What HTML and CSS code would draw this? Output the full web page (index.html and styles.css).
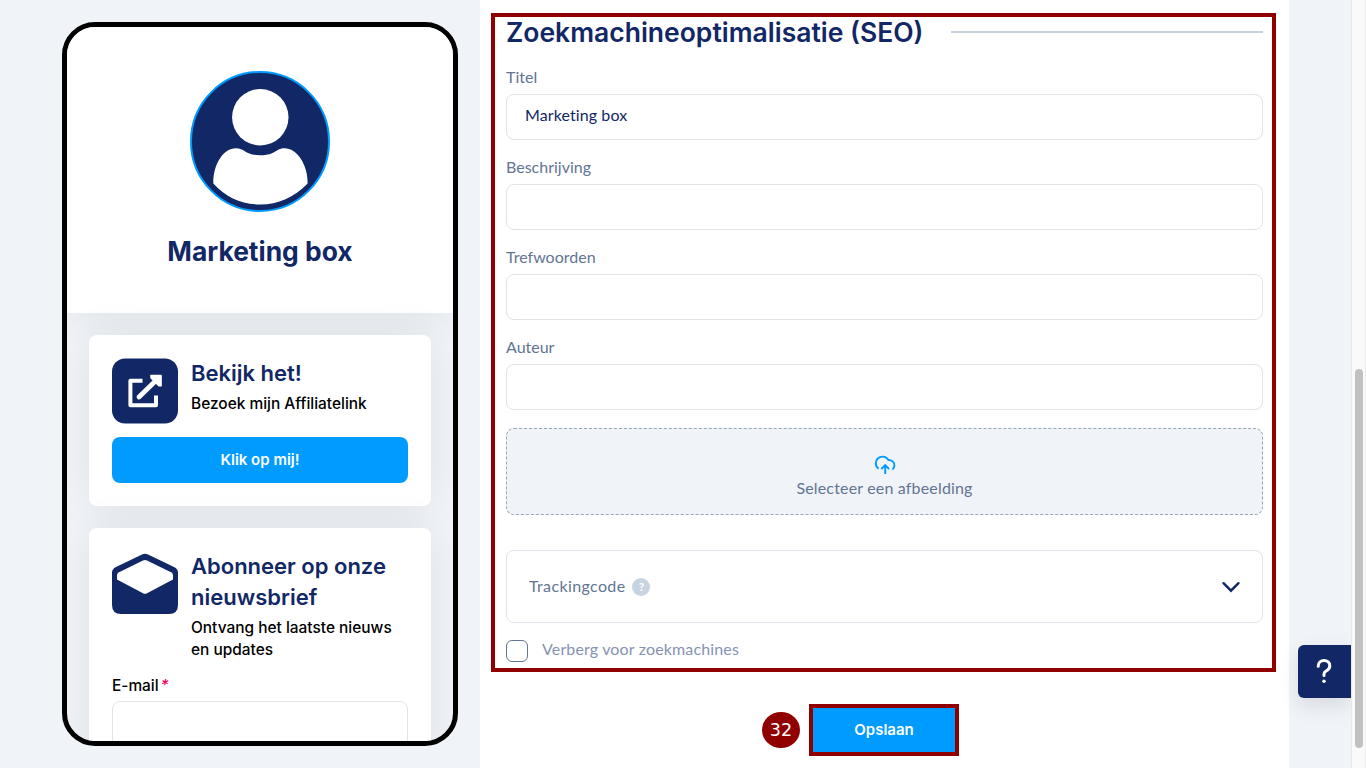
FILE: index.html
```html
<!DOCTYPE html>
<html lang="nl">
<head>
    <meta charset="UTF-8">
    <meta name="viewport" content="width=device-width, initial-scale=1.0">
    <title>Marketing box</title>
    <link rel="stylesheet" href="styles.css">
</head>
<body>

<aside class="preview">
    <div class="phone">
        <div class="profile">
            <svg class="avatar" viewBox="0 0 140 141">
                <ellipse cx="70" cy="70.5" rx="69" ry="69.5" fill="#122766" stroke="#009bff" stroke-width="2"/>
                <circle cx="70.3" cy="46.2" r="28.2" fill="#fff"/>
                <path d="M23.3 112.5C23 94 33 77.3 46 77.3C55 77.3 55 84.3 70.3 84.3C85.5 84.3 86 77.3 94.5 77.3C107 77.3 118 94 117.6 112.5C104 126.5 88 133.5 70.3 133.5C52 133.5 36 126.5 23.3 112.5Z" fill="#fff"/>
            </svg>
            <h1>Marketing box</h1>
        </div>
        <div class="card">
            <div class="card-head">
                <svg class="card-icon" viewBox="0 0 66 66">
                    <rect y="0.5" width="66" height="65" rx="13" fill="#122766"/>
                    <path d="M30.5 22.8H18.4V47.2H44V37.5" fill="none" stroke="#fff" stroke-width="4" stroke-linejoin="round"/>
                    <path d="M27 39L44.5 22" stroke="#fff" stroke-width="4.8" stroke-linecap="round"/>
                    <path d="M38.8 17.4H49.2V28L47 28L39 20Z" fill="#fff" stroke="#fff" stroke-width="1.2" stroke-linejoin="round"/>
                </svg>
                <div>
                    <h2>Bekijk het!</h2>
                    <p>Bezoek mijn Affiliatelink</p>
                </div>
            </div>
            <button class="card-btn">Klik op mij!</button>
        </div>
        <div class="card">
            <div class="card-head">
                <svg class="card-icon" viewBox="0 0 66 66">
                    <path d="M0 21.5Q0 18 4 16L30 3.6Q33 2 36 3.6L62 16Q66 18 66 21.5V54Q66 63 57 63H9Q0 63 0 54Z" fill="#122766"/>
                    <path d="M7 21.2L31 9.4Q33 8.5 35 9.4L59 21.2Q61 22.5 61 24V28.5L35 42.2Q33 43.2 31 42.2L5 28.5V24Q5 22.5 7 21.2Z" fill="#fff"/>
                </svg>
                <div>
                    <h2>Abonneer op onze nieuwsbrief</h2>
                    <p>Ontvang het laatste nieuws en updates</p>
                </div>
            </div>
            <label class="mail-label">E-mail<span>*</span></label>
            <input class="mail-input" type="email">
        </div>
    </div>
</aside>

<main class="panel">
    <section class="seo">
        <h2 class="seo-title">Zoekmachineoptimalisatie (SEO)</h2>
        <div class="field">
            <label for="titel">Titel</label>
            <input type="text" id="titel" value="Marketing box">
        </div>
        <div class="field">
            <label for="beschrijving">Beschrijving</label>
            <input type="text" id="beschrijving">
        </div>
        <div class="field">
            <label for="trefwoorden">Trefwoorden</label>
            <input type="text" id="trefwoorden">
        </div>
        <div class="field">
            <label for="auteur">Auteur</label>
            <input type="text" id="auteur">
        </div>
        <div class="upload">
            <svg width="22" height="20" viewBox="0 0 22 20" fill="none" stroke="#009bff" stroke-width="1.9">
                <path d="M4.6 14.6C2.8 13.4 1.8 11.5 1.8 9.2C1.8 5.4 4.8 2.6 8.6 2.6C11.3 2.6 13.2 3.8 14.4 6C17.8 6 20.4 8.200 20.4 11.500C20.4 13.200 19.600 14.500 18.400 15.500"/>
                <path d="M11.2 20V11M7.3 15L11.2 11.200L15.1 15"/>
            </svg>
            <span>Selecteer een afbeelding</span>
        </div>
        <div class="tracking">
            <span class="tracking-text">Trackingcode</span>
            <span class="hint">?</span>
            <svg width="20" height="12" viewBox="0 0 20 12" fill="none" stroke="#122766" stroke-width="2.4">
                <path d="M2.5 2.2L10 9.7L17.5 2.2" stroke-linecap="round"/>
            </svg>
        </div>
        <label class="hide-row"><span class="box"></span><span class="hide-text">Verberg voor zoekmachines</span></label>
    </section>
    <div class="actions">
        <span class="step">32</span>
        <button class="save-btn">Opslaan</button>
    </div>
</main>

<button class="help-btn">
    <svg width="16" height="26" viewBox="0 0 16 26" fill="none" stroke="#fff" stroke-width="3">
        <path d="M2.2 8.3C2.2 4.7 4.7 2.4 8 2.4C11.4 2.4 13.8 4.7 13.8 7.7C13.8 10.6 12 12 10.2 13C8.7 13.8 8 14.6 8 16V17.5" stroke-linecap="round"/>
        <circle cx="8" cy="23.3" r="1.7" fill="#fff" stroke="none"/>
    </svg>
</button>

<div class="scrollbar"><div class="thumb"></div></div>

</body>
</html>
```
FILE: styles.css
```css
* {
    box-sizing: border-box;
}
body {
    font-family: Inter, sans-serif;
    margin: 0;
    display: flex;
    height: 768px;
    overflow: hidden;
    background-color: #f0f3f8;
    color: #122766;
}
h1, h2, p {
    margin: 0;
}
button, input {
    font: inherit;
    outline: none;
}

/* phone preview */
.preview {
    width: 480px;
    padding: 22px 0 0 62px;
    flex-shrink: 0;
}
.phone {
    width: 396px;
    height: 724px;
    border: 5px solid #000;
    border-radius: 33px;
    overflow: hidden;
    background-color: #f0f3f8;
}
.profile {
    height: 286px;
    padding-top: 44px;
    background: #fff;
    text-align: center;
    box-shadow: 0 0 40px rgba(0, 0, 0, 0.08);
}
.avatar {
    display: block;
    width: 140px;
    height: 141px;
    margin: 0 auto;
}
.profile h1 {
    margin-top: 21px;
    font-size: 26.4px;
    line-height: 36px;
    font-weight: 700;
}
.card {
    margin: 22px 22px 0;
    padding: 23px;
    background: #fff;
    border-radius: 8px;
    box-shadow: 0 0 40px rgba(0, 0, 0, 0.08);
}
.card-head {
    display: flex;
    gap: 13px;
    min-height: 66px;
}
.card-icon {
    width: 66px;
    height: 66px;
    flex-shrink: 0;
}
.card h2 {
    font-size: 22px;
    line-height: 31px;
    font-weight: 600;
}
.card p {
    margin-top: 4px;
    color: #000;
    font-size: 15.45px;
    line-height: 22px;
    font-weight: 500;
}
.card-btn {
    display: block;
    width: 100%;
    height: 46px;
    margin-top: 13px;
    padding-bottom: 2px;
    border: none;
    border-radius: 8px;
    background-color: #009bff;
    color: #fff;
    font-size: 15px;
    font-weight: 600;
}
.mail-label {
    display: block;
    margin-top: 14px;
    color: #000;
    font-size: 15.4px;
    line-height: 22px;
    font-weight: 500;
}
.mail-label span {
    margin-left: 2px;
    color: #f5055f;
    font-style: italic;
}
.mail-input {
    display: block;
    width: 100%;
    height: 60px;
    margin-top: 4px;
    border: 1px solid #dfe4e6;
    border-radius: 8px;
}

/* seo form */
.panel {
    width: 809px;
    background: #fff;
    padding: 13px 13px 0 11px;
    flex-shrink: 0;
}
.seo {
    height: 659px;
    border: 4px solid #900000;
    padding: 0 9px 0 11px;
    font-family: Lato, sans-serif;
    font-size: 16px;
    color: #627594;
}
.seo-title {
    display: flex;
    align-items: center;
    gap: 28px;
    height: 30px;
    margin-bottom: 18px;
    color: #122766;
    font-family: Inter, sans-serif;
    font-size: 26.5px;
    font-weight: 600;
    white-space: nowrap;
}
.seo-title::after {
    content: "";
    flex: 1;
    height: 2px;
    background: #c8d3e1;
}
.field {
    height: 90px;
}
.field label {
    display: block;
    line-height: 24px;
    margin-bottom: 5px;
}
.field input {
    display: block;
    width: 100%;
    height: 46px;
    padding: 0 18px 5px;
    border: 1px solid #dfe4e6;
    border-radius: 8px;
    color: #122766;
    letter-spacing: 0.1px;
}
.upload {
    display: flex;
    flex-direction: column;
    align-items: center;
    height: 87px;
    margin-top: 3px;
    padding-top: 25px;
    border: 1px dashed #94a8b8;
    border-radius: 8px;
    background-color: #f0f3f8;
}
.upload span {
    margin-top: 2px;
    line-height: 24px;
    letter-spacing: 0.17px;
}
.tracking {
    display: flex;
    align-items: center;
    height: 73px;
    margin-top: 35px;
    padding: 0 21px 0 22px;
    border: 1px solid #dfe4ea;
    border-radius: 8px;
}
.tracking-text {
    padding-bottom: 3px;
    letter-spacing: 0.37px;
}
.hint {
    width: 18px;
    height: 18px;
    margin-left: 7px;
    border-radius: 50%;
    background: #c8d3e1;
    color: #fff;
    font-size: 11px;
    font-weight: 900;
    line-height: 18px;
    text-align: center;
}
.tracking svg {
    margin-left: auto;
}
.hide-row {
    display: flex;
    align-items: center;
    gap: 14px;
    height: 22px;
    margin-top: 17px;
    color: #8592b3;
    line-height: 20px;
}
.hide-text {
    padding-bottom: 4px;
    letter-spacing: 0.15px;
}
.box {
    width: 22px;
    height: 22px;
    border: 1px solid #627594;
    border-radius: 6px;
}
.actions {
    display: flex;
    align-items: center;
    justify-content: center;
    gap: 9px;
    margin-top: 32px;
    padding-right: 46px;
}
.step {
    width: 38px;
    height: 36px;
    border-radius: 50%;
    background: #900000;
    color: #fff;
    font-family: "DejaVu Sans", sans-serif;
    font-size: 17.5px;
    line-height: 37px;
    text-align: center;
}
.save-btn {
    width: 150px;
    height: 52px;
    padding-bottom: 3px;
    border: 4px solid #900000;
    background-color: #009bff;
    color: #fff;
    font-size: 15px;
    font-weight: 600;
}

/* help button and scrollbar */
.help-btn {
    display: flex;
    align-items: center;
    justify-content: center;
    width: 53px;
    height: 53px;
    margin: 645px 0 0 9px;
    padding: 0 1px 1px 0;
    flex-shrink: 0;
    border: none;
    border-radius: 6px 0 0 6px;
    background-color: #122766;
    box-shadow: 0 8px 20px rgba(0, 0, 0, 0.1);
}
.scrollbar {
    width: 15px;
    padding: 369px 2px 0 3px;
    border-left: 1px solid #e8e8e8;
    border-right: 1px solid #ededed;
    background: #fafafa;
    z-index: 1;
}
.thumb {
    width: 8px;
    height: 379px;
    border-radius: 4px;
    background: #c1c1c1;
}
```
